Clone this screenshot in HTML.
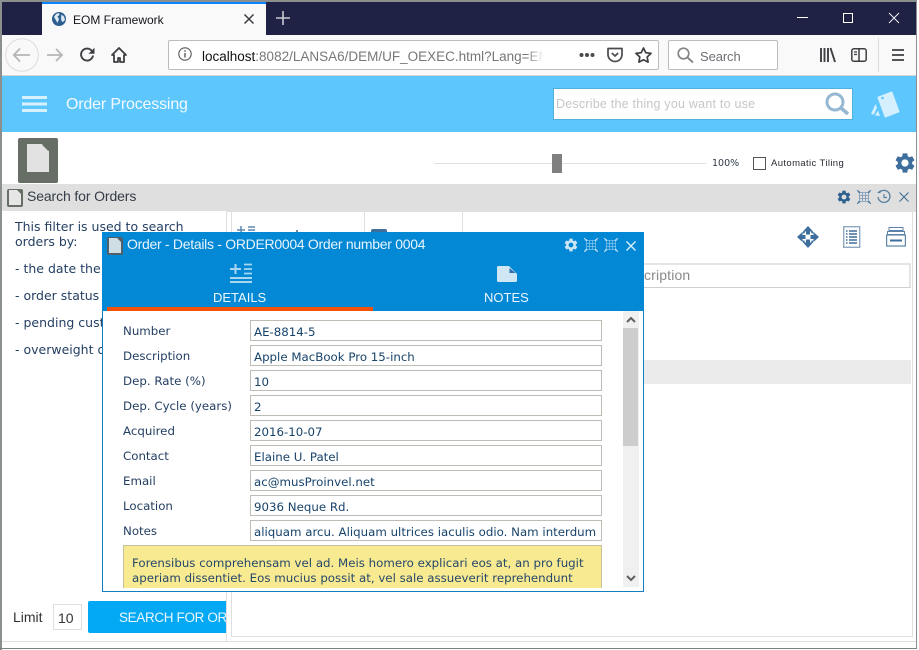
<!DOCTYPE html>
<html><head><meta charset="utf-8"><title>EOM Framework</title>
<style>
html,body{margin:0;padding:0;background:#fff}
body{width:919px;height:650px;overflow:hidden;position:relative;font-family:"Liberation Sans",sans-serif}
.a{position:absolute}
.t{position:absolute;white-space:nowrap}
.d{font-family:"DejaVu Sans",sans-serif;font-size:11.8px;color:#243f63;white-space:nowrap;position:absolute}
.f{position:absolute;left:250px;width:350px;height:19px;border:1px solid #bdbcb5;background:#fff;font-family:"DejaVu Sans",sans-serif;font-size:11.8px;line-height:22px;color:#17436b;text-indent:3px;white-space:nowrap;overflow:hidden}
svg{position:absolute;overflow:visible}
</style></head><body>
<svg width="0" height="0"><defs><symbol id="g" viewBox="0 0 24 24"><path d="M19.14 12.94c.04-.3.06-.61.06-.94 0-.32-.02-.64-.07-.94l2.03-1.58c.18-.14.23-.41.12-.61l-1.92-3.32c-.12-.22-.37-.29-.59-.22l-2.39.96c-.5-.38-1.03-.7-1.62-.94l-.36-2.54c-.04-.24-.24-.41-.48-.41h-3.84c-.24 0-.43.17-.47.41l-.36 2.54c-.59.24-1.13.57-1.62.94l-2.39-.96c-.22-.08-.47 0-.59.22L2.74 8.87c-.12.21-.08.47.12.61l2.03 1.58c-.05.3-.09.63-.09.94s.02.64.07.94l-2.03 1.58c-.18.14-.23.41-.12.61l1.92 3.32c.12.22.37.29.59.22l2.39-.96c.5.38 1.03.7 1.62.94l.36 2.54c.05.24.24.41.48.41h3.84c.24 0 .44-.17.47-.41l.36-2.54c.59-.24 1.13-.56 1.62-.94l2.39.96c.22.08.47 0 .59-.22l1.92-3.32c.12-.22.07-.47-.12-.61l-2.01-1.58zM12 15.6c-1.98 0-3.6-1.62-3.6-3.6s1.62-3.6 3.6-3.6 3.6 1.62 3.6 3.6-1.62 3.6-3.6 3.6z"/></symbol>
<symbol id="m" viewBox="0 0 14 14"><path d="M0 0l3 3M14 0l-3 3M0 14l3-3M14 14l-3-3" fill="none" stroke="currentColor" stroke-width="1.200"/><path d="M2.500 1v12M11.500 1v12M1 2.500h12M1 11.500h12M5.500 2.500v9M8.500 2.500v9M2.500 5.500h9M2.500 8.500h9" fill="none" stroke="currentColor" stroke-width=".8" opacity=".7"/></symbol></defs></svg>

<!-- browser chrome -->
<div class="a" style="left:2px;top:2px;width:915px;height:33px;background:#1f2244"></div>
<div class="a" style="left:42px;top:2px;width:224px;height:33px;background:#f9f9fa"></div>
<div class="a" style="left:42px;top:2px;width:224px;height:2px;background:#0a84ff"></div>
<svg style="left:52px;top:12px" width="14" height="14" viewBox="0 0 14 14"><circle cx="7" cy="7" r="7" fill="#2c5f8f"/><path d="M4 2l3-1 .5 2-2 1.500L7 7l-1.500 4-2-3.500L2 5zM9.500 2.500l2.500 2 1 3.500-2 2-1.500-1L9 6z" fill="#dfe9f2"/></svg>
<div class="t" style="left:73px;top:13px;font-size:12px;line-height:15px;color:#15141a">EOM Framework</div>
<svg style="left:244px;top:14px" width="10" height="10" viewBox="0 0 10 10"><path d="M.5.500l9 9M9.500.500l-9 9" stroke="#3b3b40" stroke-width="1.500"/></svg>
<svg style="left:276px;top:11px" width="14" height="14" viewBox="0 0 14 14"><path d="M7 0v14M0 7h14" stroke="#c9cad3" stroke-width="1.600"/></svg>
<svg style="left:797px;top:17px" width="11" height="2"><rect width="11" height="1" fill="#fff"/></svg>
<svg style="left:843px;top:13px" width="10" height="10"><rect x=".5" y=".5" width="9" height="9" fill="none" stroke="#fff"/></svg>
<svg style="left:889px;top:13px" width="10" height="10" viewBox="0 0 10 10"><path d="M0 0l10 10M10 0L0 10" stroke="#fff" stroke-width=".9"/></svg>

<div class="a" style="left:2px;top:35px;width:914px;height:40px;background:#f9f9fa"></div>
<div class="a" style="left:2px;top:75px;width:914px;height:1px;background:#d5d5d8"></div>
<svg style="left:5px;top:38px" width="34" height="34" viewBox="0 0 34 34"><circle cx="17" cy="17" r="16.300" fill="#f9f9fa" stroke="#dcdcdf"/><path d="M25 17H9M15 10.500L8.800 17l6.200 6.500" fill="none" stroke="#b6b6b9" stroke-width="1.800"/></svg>
<svg style="left:47px;top:48px" width="16" height="14" viewBox="0 0 16 14"><path d="M0 7h15M9 1l6 6-6 6" fill="none" stroke="#b6b6b9" stroke-width="1.800"/></svg>
<svg style="left:80px;top:47px" width="15" height="15" viewBox="0 0 15 15"><path d="M13 8.500A6 6 0 1 1 11.500 3.500L14 6" fill="none" stroke="#3f3f43" stroke-width="1.900"/><path d="M14.500.800v6h-6z" fill="#3f3f43"/></svg>
<svg style="left:111px;top:47px" width="16" height="16" viewBox="0 0 16 16"><path d="M8 1L1 8h2v7h4v-4h2v4h4V8h2z" fill="none" stroke="#3f3f43" stroke-width="1.800" stroke-linejoin="round"/></svg>

<div class="a" style="left:168px;top:40px;width:489px;height:28px;background:#fff;border:1px solid #bcbcbf;border-radius:2px"></div>
<svg style="left:178px;top:47px" width="14" height="14" viewBox="0 0 14 14"><circle cx="7" cy="7" r="6.200" fill="none" stroke="#58585c" stroke-width="1.100"/><rect x="6.300" y="6" width="1.400" height="4.500" fill="#58585c"/><rect x="6.300" y="3.300" width="1.400" height="1.500" fill="#58585c"/></svg>
<div class="t" style="left:202px;top:48px;width:342px;overflow:hidden;font-size:13.500px;line-height:17px;color:#77777a"><span style="color:#111">localhost</span>:8082/LANSA6/DEM/UF_OEXEC.html?Lang=EN</div>
<div class="a" style="left:526px;top:44px;width:18px;height:22px;background:linear-gradient(90deg,rgba(255,255,255,0),#fff)"></div>
<svg style="left:579px;top:52px" width="16" height="6"><circle cx="2.500" cy="3" r="2" fill="#4a4a4f"/><circle cx="8" cy="3" r="2" fill="#4a4a4f"/><circle cx="13.500" cy="3" r="2" fill="#4a4a4f"/></svg>
<svg style="left:607px;top:47px" width="16" height="16" viewBox="0 0 16 16"><path d="M1 1.500h14v6a7 7 0 0 1-14 0z" fill="none" stroke="#4a4a4f" stroke-width="1.700" stroke-linejoin="round"/><path d="M4.800 6L8 9l3.200-3" fill="none" stroke="#4a4a4f" stroke-width="1.700"/></svg>
<svg style="left:635px;top:47px" width="17" height="16" viewBox="0 0 17 16"><path d="M8.500 1l2.300 4.700 5.200.7-3.800 3.600.9 5.100-4.600-2.400-4.600 2.400.9-5.100L1 6.400l5.200-.7z" fill="none" stroke="#3f3f43" stroke-width="1.700" stroke-linejoin="round"/></svg>

<div class="a" style="left:668px;top:40px;width:108px;height:28px;background:#fff;border:1px solid #bcbcbf;border-radius:2px"></div>
<svg style="left:677px;top:47px" width="17" height="16" viewBox="0 0 17 16"><circle cx="6.500" cy="6.500" r="5.300" fill="none" stroke="#858589" stroke-width="1.700"/><path d="M10.500 10.500l5.500 5" stroke="#858589" stroke-width="1.900"/></svg>
<div class="t" style="left:700px;top:48px;font-size:13px;line-height:17px;color:#6f6f75;letter-spacing:-.1px">Search</div>
<svg style="left:820px;top:48px" width="16" height="14" viewBox="0 0 16 14"><path d="M1 0v14M4.500 0v14M8 0v14M10.500 0l4.500 14" fill="none" stroke="#3f3f43" stroke-width="1.900"/></svg>
<svg style="left:851px;top:48px" width="16" height="14" viewBox="0 0 16 14"><rect x=".8" y=".8" width="14.400" height="12.400" rx="2" fill="none" stroke="#3f3f43" stroke-width="1.500"/><path d="M8 1v12" stroke="#3f3f43" stroke-width="1.500"/><path d="M3 4h3M3 6.500h3" stroke="#3f3f43" stroke-width="1.200"/></svg>
<div class="a" style="left:878px;top:38px;width:1px;height:34px;background:#dcdcde"></div>
<svg style="left:892px;top:49px" width="13" height="12"><path d="M0 1h12M0 6h12M0 11h12" stroke="#3f3f43" stroke-width="1.700"/></svg>

<!-- app header -->
<div class="a" style="left:2px;top:76px;width:914px;height:56px;background:#5cc6fd"></div>
<svg style="left:22px;top:96px" width="25" height="16"><path d="M0 1.500h25M0 8h25M0 14.500h25" stroke="#d7f0fe" stroke-width="3"/></svg>
<div class="t" style="left:66px;top:95px;font-size:16px;line-height:19px;color:#f2faff;letter-spacing:-.17px">Order Processing</div>
<div class="a" style="left:553px;top:88px;width:298px;height:30px;background:#fff;border:1px solid #52b0df"></div>
<div class="t" style="left:556px;top:96px;font-size:12.500px;line-height:16px;color:#c6c6c6;letter-spacing:.22px">Describe the thing you want to use</div>
<svg style="left:825px;top:92px" width="25" height="24" viewBox="0 0 25 24"><circle cx="10" cy="10" r="8" fill="none" stroke="#94b8d2" stroke-width="3"/><path d="M16 16l7 6" stroke="#94b8d2" stroke-width="3.500"/></svg>
<svg style="left:870px;top:91px" width="30" height="27" viewBox="0 0 30 27"><path d="M8.500 6.500L21.500 1.500 28.500 20.500 15.500 25.500z" fill="#d4effe" stroke="#d4effe" stroke-width="2" stroke-linejoin="round"/><circle cx="12.500" cy="7" r="1.300" fill="#5cc6fd"/><path d="M1 23l4.500-10 1.500 3.500-3 7zM5 24.500l3-5 2 5.500z" fill="#d4effe"/></svg>

<!-- toolbar row -->
<div class="a" style="left:18px;top:138px;width:40px;height:45px;background:#676e66;border-radius:2px"></div>
<svg style="left:27px;top:144px" width="22" height="28" viewBox="0 0 22 28"><path d="M0 0h15l7 7v21H0z" fill="#e1e2e1"/><path d="M15.500 .500l6 6" stroke="#676e66" stroke-width="1"/></svg>
<div class="a" style="left:434px;top:163px;width:272px;height:1px;background:#dfdfdf"></div>
<div class="a" style="left:552px;top:154px;width:10px;height:19px;background:#808080"></div>
<div class="t" style="left:712px;top:157px;font-family:'DejaVu Sans',sans-serif;font-size:9.500px;line-height:14px;color:#2d3a48">100%</div>
<div class="a" style="left:753px;top:157px;width:11px;height:11px;border:1px solid #555;background:#fff"></div>
<div class="t" style="left:771px;top:157px;font-size:9.500px;line-height:13px;color:#2a2a33;letter-spacing:.38px">Automatic Tiling</div>
<svg style="left:893px;top:151px;fill:#3e6e9c" width="24" height="24"><use href="#g"/></svg>

<!-- search panel bar -->
<div class="a" style="left:2px;top:184px;width:914px;height:27px;background:#dfdfdf"></div>
<div class="a" style="left:7px;top:189px;width:16px;height:18px;background:#676e66;border-radius:2px"></div>
<svg style="left:9px;top:190px" width="12" height="15" viewBox="0 0 12 15"><path d="M0 0h8l4 4v11H0z" fill="#e6e6e6"/></svg>
<div class="t" style="left:27px;top:188px;font-size:14px;line-height:17px;color:#333c46;letter-spacing:-.12px">Search for Orders</div>
<svg style="left:836px;top:189px;fill:#2f618f" width="16" height="16"><use href="#g"/></svg>
<svg style="left:857px;top:190px;color:#4e7ba3" width="14" height="14"><use href="#m"/></svg>
<svg style="left:877px;top:190px" width="14" height="14" viewBox="0 0 14 14"><path d="M2 3a6 6 0 1 1-1 4" fill="none" stroke="#59809f" stroke-width="1.300"/><path d="M7 4v3.500h3" fill="none" stroke="#59809f" stroke-width="1.200"/><path d="M0 3h3.500V0z" fill="#59809f"/></svg>
<svg style="left:899px;top:192px" width="10" height="10"><path d="M.5.500l9 9M9.500.500l-9 9" stroke="#4a7197" stroke-width="1.200"/></svg>

<!-- left filter -->
<div class="d" style="left:15px;top:219px;line-height:15px;font-size:12.500px">This filter is used to search<br>orders by:</div>
<div class="d" style="left:15px;top:261px;line-height:15px;font-size:12.500px">- the date the</div>
<div class="d" style="left:15px;top:288px;line-height:15px;font-size:12.500px">- order status</div>
<div class="d" style="left:15px;top:315px;line-height:15px;font-size:12.500px">- pending cust</div>
<div class="d" style="left:15px;top:342px;line-height:15px;font-size:12.500px">- overweight o</div>

<div class="a" style="left:226px;top:211px;width:1px;height:430px;background:#dfdfdf"></div>
<div class="a" style="left:364px;top:211px;width:1px;height:21px;background:#dfdfdf"></div>
<div class="a" style="left:462px;top:211px;width:1px;height:21px;background:#dfdfdf"></div>
<svg style="left:237px;top:226px" width="22" height="6" viewBox="0 0 22 6"><path d="M0 4h8M4 0v6M11 1h7M11 4h7" stroke="#5f87ad" stroke-width="1.500"/></svg>
<div class="a" style="left:371px;top:229px;width:16px;height:3px;background:#3e6e9c;border-radius:2px 2px 0 0"></div>
<div class="a" style="left:296px;top:230px;width:2px;height:2px;background:#7a8794"></div>

<!-- limit / button -->
<div class="t" style="left:13px;top:609px;font-size:14px;line-height:17px;color:#333">Limit</div>
<div class="a" style="left:53px;top:604px;width:27px;height:24px;border:1px solid #dfdfdf;background:#fff;font-size:14px;line-height:27px;color:#333;text-indent:4px">10</div>
<div class="a" style="left:88px;top:601px;width:138px;height:32px;background:#03a9f4;border-radius:2px 0 0 2px;overflow:hidden"><div class="t" style="left:31px;top:8px;font-size:13.500px;line-height:17px;color:#eaf7fe;letter-spacing:-.35px">SEARCH FOR ORDERS</div></div>

<!-- right panel -->
<div class="a" style="left:231px;top:211px;width:680px;height:425px;border:1px solid #dfdfdf;border-top:0"></div>
<div class="a" style="left:227px;top:211px;width:690px;height:1px;background:#dfdfdf"></div>
<div class="a" style="left:2px;top:641px;width:914px;height:1px;background:#dfdfdf"></div>
<svg style="left:797px;top:226px" width="22" height="22" viewBox="0 0 22 22"><path d="M11 0l5 5.500H6zM11 22l-5-5.500h10zM0 11l5.500-5v10zM22 11l-5.500 5V6z" fill="#3e6e9c"/><path d="M6.500 7.500v-1l1-1M15.500 7.500v-1l-1-1M6.500 14.500v1l1 1M15.500 14.500v1l-1 1" fill="none" stroke="#3e6e9c" stroke-width="1.600"/><path d="M9 5h4v3.500h-4zM9 13.500h4V17h-4zM5 9h3.500v4H5zM13.500 9H17v4h-3.500z" fill="#3e6e9c"/></svg>
<svg style="left:843px;top:226px" width="18" height="22" viewBox="0 0 18 22"><rect x=".7" y=".7" width="16" height="20.600" fill="#fff" stroke="#8fa9c2" stroke-width="1.400"/><path d="M6 5h8M6 8h8M6 11h8M6 14h8M6 17h8" stroke="#3e6e9c" stroke-width="1.500"/><path d="M3 5h1.500M3 8h1.500M3 11h1.500M3 14h1.500M3 17h1.500" stroke="#3e6e9c" stroke-width="1.500"/></svg>
<svg style="left:886px;top:227px" width="20" height="20" viewBox="0 0 20 20"><rect x="3" y=".5" width="14" height="3" fill="#fff" stroke="#5b84a8" stroke-width="1"/><rect x="1.500" y="4.500" width="17" height="3" fill="#fff" stroke="#5b84a8" stroke-width="1"/><rect x=".6" y="8" width="18.800" height="11" fill="#fff" stroke="#5b84a8" stroke-width="1.200"/><path d="M4 13.500h12" stroke="#3e6e9c" stroke-width="2"/></svg>
<div class="a" style="left:644px;top:263px;width:267px;height:25px;border-top:2px solid #e4e4e4;border-bottom:1px solid #cfcfcf;border-right:2px solid #e4e4e4;box-sizing:border-box"></div>
<div class="a" style="left:644px;top:360px;width:267px;height:24px;background:#ebebeb"></div>
<div class="t" style="left:644px;top:267px;font-size:14px;line-height:17px;color:#8a8a8a;letter-spacing:.15px">cription</div>

<!-- dialog -->
<div class="a" style="left:102px;top:232px;width:540px;height:358px;border:1px solid #0f7fc2;background:#fff"></div>
<div class="a" style="left:102px;top:232px;width:542px;height:79px;background:#0288d4"></div>
<div class="a" style="left:107px;top:307px;width:266px;height:4px;background:#f4520a"></div>
<div class="a" style="left:107px;top:237px;width:16px;height:18px;background:#50606b;border-radius:2px"></div>
<svg style="left:109px;top:238px" width="12" height="15" viewBox="0 0 12 15"><path d="M0 0h8l4 4v11H0z" fill="#cfdde4"/></svg>
<div class="t" style="left:127px;top:236px;font-size:14px;line-height:17px;color:#e8f4fb;letter-spacing:-.29px">Order - Details - ORDER0004 Order number 0004</div>
<svg style="left:563px;top:237px;fill:#cfe6f5" width="16" height="16"><use href="#g"/></svg>
<svg style="left:584px;top:238px;color:#b8dcf2" width="14" height="14"><use href="#m"/></svg>
<svg style="left:604px;top:238px;color:#b8dcf2" width="14" height="14"><use href="#m"/></svg>
<svg style="left:626px;top:241px" width="10" height="10"><path d="M.5.500l9 9M9.500.500l-9 9" stroke="#e3f2fb" stroke-width="1.300"/></svg>
<svg style="left:230px;top:263px" width="22" height="22" viewBox="0 0 22 22"><path d="M0 6h11M5.500 1v10" stroke="#a9d6f1" stroke-width="2"/><path d="M14 1.500h8M14 6h8M14 10.500h8" stroke="#a9d6f1" stroke-width="1.700"/><path d="M0 15h22M0 19h22" stroke="#a9d6f1" stroke-width="2"/></svg>
<div class="t" style="left:213px;top:290px;font-size:13px;line-height:15px;color:#eef7fd">DETAILS</div>
<svg style="left:497px;top:266px" width="20" height="16" viewBox="0 0 20 16"><path d="M1.500 0H12l8 8v6.500a1.500 1.500 0 0 1-1.500 1.500h-17A1.500 1.500 0 0 1 0 14.500v-13A1.500 1.500 0 0 1 1.500 0z" fill="#cfe6f5"/><path d="M12.500 2v5h6z" fill="#2f6fb0"/></svg>
<div class="t" style="left:484px;top:290px;font-size:13px;line-height:15px;color:#eef7fd">NOTES</div>

<div class="d" style="left:123px;top:324px;line-height:15px;">Number</div><div class="f" style="top:320px">AE-8814-5</div>
<div class="d" style="left:123px;top:349px;line-height:15px;">Description</div><div class="f" style="top:345px">Apple MacBook Pro 15-inch</div>
<div class="d" style="left:123px;top:374px;line-height:15px;">Dep. Rate (%)</div><div class="f" style="top:370px">10</div>
<div class="d" style="left:123px;top:399px;line-height:15px;">Dep. Cycle (years)</div><div class="f" style="top:395px">2</div>
<div class="d" style="left:123px;top:424px;line-height:15px;">Acquired</div><div class="f" style="top:420px">2016-10-07</div>
<div class="d" style="left:123px;top:449px;line-height:15px;">Contact</div><div class="f" style="top:445px">Elaine U. Patel</div>
<div class="d" style="left:123px;top:474px;line-height:15px;">Email</div><div class="f" style="top:470px">ac@musProinvel.net</div>
<div class="d" style="left:123px;top:499px;line-height:15px;">Location</div><div class="f" style="top:495px">9036 Neque Rd.</div>
<div class="d" style="left:123px;top:524px;line-height:15px;">Notes</div><div class="f" style="top:520px">aliquam arcu. Aliquam ultrices iaculis odio. Nam interdum</div>

<div class="a" style="left:123px;top:545px;width:477px;height:42px;background:#f7ea90;border:1px solid #c4c0a0;border-bottom:0;overflow:hidden"><div class="d" style="left:8px;top:10px;line-height:15px;color:#27476b">Forensibus comprehensam vel ad. Meis homero explicari eos at, an pro fugit<br>aperiam dissentiet. Eos mucius possit at, vel sale assueverit reprehendunt</div></div>

<div class="a" style="left:623px;top:311px;width:16px;height:276px;background:#f0f0f0"></div>
<div class="a" style="left:623px;top:328px;width:15px;height:118px;background:#cdcdcd"></div>
<svg style="left:626px;top:316px" width="10" height="7"><path d="M1 6l4-4 4 4" fill="none" stroke="#606060" stroke-width="2"/></svg>
<svg style="left:626px;top:575px" width="10" height="7"><path d="M1 1l4 4 4-4" fill="none" stroke="#606060" stroke-width="2"/></svg>

<!-- window frame -->
<div class="a" style="left:0;top:0;width:917px;height:2px;background:#8b8f8d"></div>
<div class="a" style="left:0;top:0;width:2px;height:650px;background:#8b8f8d"></div>
<div class="a" style="left:916px;top:0;width:1px;height:649px;background:#8b8f8d"></div>
<div class="a" style="left:0;top:648px;width:917px;height:1px;background:#7c8280"></div>
</body></html>
